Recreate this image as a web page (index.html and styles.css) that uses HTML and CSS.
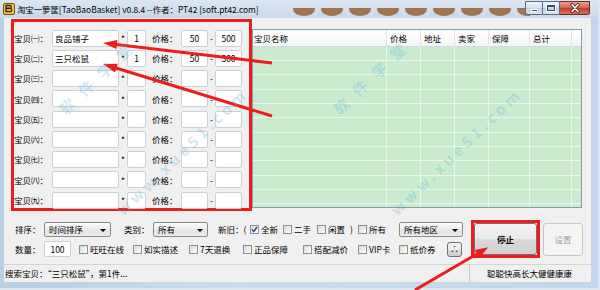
FILE: index.html
```html
<!DOCTYPE html>
<html lang="en">
<head>
    <meta charset="UTF-8">
    <meta name="viewport" content="width=device-width, initial-scale=1.0">
    <title>淘宝一箩筐</title>
    <link rel="stylesheet" href="styles.css">
</head>
<body>
    <div class="window">
        <div class="titlebar">
            <!-- desktop wallpaper seen through the glass -->
            <svg class="deco" width="240" height="10" viewBox="0 0 240 10">
                <g fill="#9c6a40">
                    <ellipse cx="14" cy="1" rx="11" ry="7"/>
                    <ellipse cx="42" cy="1" rx="11" ry="7"/>
                    <ellipse cx="70" cy="1" rx="11" ry="7"/>
                    <ellipse cx="98" cy="1" rx="11" ry="7"/>
                    <ellipse cx="126" cy="1" rx="11" ry="7"/>
                    <ellipse cx="154" cy="1" rx="11" ry="7"/>
                    <ellipse cx="182" cy="1" rx="11" ry="7"/>
                    <ellipse cx="210" cy="1" rx="11" ry="7"/>
                    <ellipse cx="238" cy="1" rx="11" ry="7"/>
                </g>
            </svg>
            <svg class="app-icon" width="12" height="12" viewBox="0 0 12 12">
                <rect x="0.5" y="0.5" width="11" height="11" rx="1.5" fill="#f3c53c" stroke="#7a4a10"/>
                <path d="M3 2.5h4.2c1.4 0 1.4 2.6 0 2.6H3z M3 5.6h4.6c1.5 0 1.5 3 0 3H3z" fill="none" stroke="#3a2408" stroke-width="1.3"/>
            </svg>
            <span class="title">淘宝一箩筐[TaoBaoBasket] v0.8.4 --作者：PT42 [soft.pt42.com]</span>
            <div class="controls">
                <span class="ctl min"><i></i></span>
                <span class="ctl max"><i></i></span>
                <span class="ctl close">
                    <svg width="12" height="10" viewBox="0 0 12 10">
                        <path d="M3 1.5l6 7M9 1.5l-6 7" stroke="#5a1a14" stroke-width="3.2" stroke-linecap="round"/>
                        <path d="M3 1.5l6 7M9 1.5l-6 7" stroke="#fff" stroke-width="1.6" stroke-linecap="round"/>
                    </svg>
                </span>
            </div>
        </div>

        <div class="client">
            <div class="top">
                <div class="items" id="items">
                    <!-- item rows are filled in below -->
                </div>
                <div class="list">
                    <table>
                        <thead>
                            <tr>
                                <th class="c-name">宝贝名称</th>
                                <th class="c-price">价格</th>
                                <th class="c-addr">地址</th>
                                <th class="c-seller">卖家</th>
                                <th class="c-guard">保障</th>
                                <th class="c-total">总计</th>
                                <th class="c-rest"></th>
                            </tr>
                        </thead>
                        <tbody id="resultRows"></tbody>
                    </table>
                </div>
            </div>

            <div class="bottom">
                <div class="filters">
                    <div class="frow frow-sort">
                        <span>排序：</span>
                        <span class="combo">时间排序</span>
                        <span>类别：</span>
                        <span class="combo">所有</span>
                        <span>新旧：(</span>
                        <label class="chk"><i class="box checked"><svg width="7" height="7" viewBox="0 0 7 7"><path d="M1 3.6l1.8 1.9L6 1" fill="none" stroke="#1f3f96" stroke-width="1.4"/></svg></i>全新</label>
                        <label class="chk"><i class="box"></i>二手</label>
                        <label class="chk"><i class="box"></i>闲置</label>
                        <span>)</span>
                        <label class="chk"><i class="box"></i>所有</label>
                        <span class="combo">所有地区</span>
                    </div>
                    <div class="frow frow-opts">
                        <span>数量：</span>
                        <span><input class="count" type="text" value="100"></span>
                        <label class="chk"><i class="box"></i>旺旺在线</label>
                        <label class="chk"><i class="box"></i>如实描述</label>
                        <label class="chk"><i class="box"></i>7天退换</label>
                        <label class="chk"><i class="box"></i>正品保障</label>
                        <label class="chk"><i class="box"></i>搭配减价</label>
                        <label class="chk"><i class="box"></i>VIP卡</label>
                        <label class="chk"><i class="box"></i>抵价券</label>
                        <button class="btn tiny">∴</button>
                    </div>
                </div>
                <div class="stop-mark">
                    <button class="btn stop">停止</button>
                </div>
                <button class="btn setup" disabled>设置</button>
            </div>
        </div>

        <div class="status">
            <span class="status-left">搜索宝贝：“三只松鼠”，第1件...</span>
            <span class="status-right">聪聪快高长大健健康康</span>
        </div>
    </div>

    <!-- annotation arrows drawn over the window -->
    <svg class="arrows" width="600" height="290" viewBox="0 0 600 290">
        <g stroke="#ee1d1d" stroke-width="3" fill="#ee1d1d">
            <line x1="272" y1="63" x2="116" y2="44.6"/>
            <polygon points="103,43 117.4,40.1 116.4,49.1" stroke="none"/>
            <line x1="272" y1="116" x2="116" y2="68"/>
            <polygon points="103,64 117.7,63.8 115.1,72.4" stroke="none"/>
            <line x1="415" y1="290" x2="478" y2="253.3"/>
            <polygon points="488.3,247.3 479.4,257.7 474.8,249.9" stroke="none"/>
        </g>
    </svg>

    <div class="wm wm-cn wm-a">软件学堂</div>
    <div class="wm wm-url wm-b">www.xue51.com</div>
    <div class="wm wm-cn wm-c">软件学堂</div>
    <div class="wm wm-url wm-d">www.xue51.com</div>

    <script>
        const items = [
            { name: "良品铺子", qty: "1", min: "50", max: "500" },
            { name: "三只松鼠", qty: "1", min: "50", max: "500" }
        ];
        const marks = ["㈠", "㈡", "㈢", "㈣", "㈤", "㈥", "㈦", "㈧", "㈨"];

        // Build the nine item rows
        const itemBox = document.getElementById("items");
        marks.forEach((mark, i) => {
            const data = items[i] || { name: "", qty: "", min: "", max: "" };
            const row = document.createElement("div");
            row.className = "item";
            row.innerHTML = `
                <span class="lbl">宝贝${mark}：</span>
                <input class="name" type="text" value="${data.name}">
                <span class="star">*</span>
                <input class="qty" type="text" value="${data.qty}">
                <span class="price">价格：</span>
                <input class="num" type="text" value="${data.min}">
                <span class="dash">-</span>
                <input class="num" type="text" value="${data.max}">
            `;
            itemBox.appendChild(row);
        });

        // Empty result list rows
        const listBody = document.getElementById("resultRows");
        for (let i = 0; i < 12; i++) {
            const row = document.createElement("tr");
            row.innerHTML = "<td></td><td></td><td></td><td></td><td></td><td></td><td></td>";
            listBody.appendChild(row);
        }
    </script>
</body>
</html>
```

FILE: styles.css
```css
* {
    box-sizing: border-box;
}
body {
    margin: 0;
    width: 600px;
    height: 290px;
    overflow: hidden;
    position: relative;
    background: #dfe6ee;
    font-family: "Noto Sans CJK SC", "DejaVu Sans", sans-serif;
    font-size: 8.5px;
    line-height: 1;
    color: #000;
}
.window {
    width: 598px;
    height: 288px;
    padding: 0 7px 6px 4px;
    display: flex;
    flex-direction: column;
    background: linear-gradient(90deg, #b9cfe6, #cddcec 40%, #c2d5ea);
}

/* title bar */
.titlebar {
    position: relative;
    flex: none;
    height: 18px;
    margin: 0 -7px 0 -4px;
    padding-left: 3px;
    display: flex;
    align-items: center;
    background: linear-gradient(#dce6f1, #c8d8ea);
}
.deco {
    position: absolute;
    left: 290px;
    top: 8px;
    opacity: 0.9;
}
.app-icon {
    flex: none;
    position: relative;
}
.title {
    position: relative;
    margin-left: 2px;
    font-size: 8.4px;
    white-space: nowrap;
}
.controls {
    display: flex;
    align-self: flex-start;
    margin: 1px 8px 0 auto;
    position: relative;
}
.ctl {
    height: 14px;
    display: flex;
    align-items: center;
    justify-content: center;
    border: 1px solid #596b86;
    border-left: none;
    background: linear-gradient(#eef3f9, #d4dfeb 50%, #c3d1e2 51%, #d9e4ef);
}
.min {
    width: 18px;
    border-left: 1px solid #596b86;
    border-bottom-left-radius: 3px;
}
.min i {
    width: 7px;
    height: 3px;
    margin-top: 5px;
    background: #3d4a5c;
    border: 1px solid #fff;
}
.max {
    width: 17px;
}
.max i {
    width: 8px;
    height: 6px;
    border: 1px solid #3d4a5c;
    border-top-width: 2px;
    box-shadow: 0 0 0 1px #fff;
}
.close {
    width: 30px;
    border-bottom-right-radius: 3px;
    border-color: #6b2a22;
    background: linear-gradient(#e6a396, #d0604d 50%, #c13e27 51%, #d8725a);
}

/* client area */
.client {
    flex: 1;
    display: flex;
    flex-direction: column;
    background: #f0f0f0;
}
.top {
    display: flex;
    align-items: flex-start;
}
.items {
    width: 241px;
    height: 192px;
    margin: 1px 0 0 7px;
    padding-top: 7.5px;
    border: 3px solid #ee1d1d;
    display: flex;
    flex-direction: column;
    gap: 3.25px;
}
.item {
    height: 17px;
    display: flex;
    align-items: center;
}
.item input,
.count {
    height: 17px;
    padding: 0 2px;
    border: 1px solid #ccd0d5;
    border-radius: 2px;
    background: #fff;
    font: inherit;
    color: #000;
}
.lbl {
    width: 38px;
}
.item .name {
    width: 67px;
}
.star {
    width: 8px;
    text-align: center;
}
.item .qty {
    width: 19px;
    text-align: center;
}
.price {
    width: 35px;
    padding-left: 6px;
}
.item .num {
    width: 27px;
    text-align: center;
}
.dash {
    width: 7px;
    text-align: center;
}

/* result list */
.list {
    width: 330px;
    height: 179px;
    margin-top: 11px;
    border: 1px solid #8d99a8;
    background: #caebce;
    overflow: hidden;
}
.list table {
    width: 100%;
    table-layout: fixed;
    border-collapse: separate;
    border-spacing: 0;
}
.list th {
    height: 17px;
    padding: 0 0 0 3px;
    text-align: left;
    font-weight: normal;
    border-right: 1px solid #e1e3e6;
    border-bottom: 1px solid #d5d7da;
    background: linear-gradient(#ffffff, #f4f5f7);
}
.list th.c-name {
    width: 134px;
    padding-left: 1px;
}
.c-price,
.c-addr,
.c-seller {
    width: 34px;
}
.c-guard {
    width: 41px;
}
.c-total {
    width: 42px;
}
.list th.c-rest {
    border-right: none;
}
.list td {
    height: 14px;
    padding: 0;
    border-right: 1px solid #ebf7ec;
    border-bottom: 1px solid #ebf7ec;
}
.list tr:nth-child(3n) td {
    height: 15px;
}
.list td:last-child {
    border-right: none;
}

/* options under the list */
.bottom {
    display: flex;
    align-items: flex-start;
    margin-top: 9px;
}
.filters {
    width: 467px;
    margin-top: 1px;
    padding-left: 11px;
    display: flex;
    flex-direction: column;
    gap: 4px;
}
.frow {
    height: 16px;
    display: grid;
    align-items: center;
}
.frow-sort {
    grid-template-columns: 29px 80px 29px 65px 32px 33px 34px 33px 8px 41px 64px;
}
.frow-opts {
    grid-template-columns: 29px 35px 54px 56px 54px 60px 55px 41px 48px 15px;
}
.combo {
    position: relative;
    height: 15px;
    padding-left: 4px;
    display: flex;
    align-items: center;
    border: 1px solid #8c8c8c;
    border-radius: 2px;
    background: linear-gradient(#fafafa, #ececec 50%, #e2e2e2 51%, #ebebeb);
}
.frow-sort .combo:nth-child(2) {
    width: 67px;
}
.frow-sort .combo:nth-child(4) {
    width: 55px;
}
.combo::after {
    content: "";
    position: absolute;
    right: 4px;
    top: 6px;
    border: 3px solid transparent;
    border-top: 3px solid #000;
    border-bottom: none;
}
.count {
    width: 27px;
    height: 16px;
    text-align: center;
}
.chk {
    display: flex;
    align-items: center;
    white-space: nowrap;
}
.box {
    width: 9px;
    height: 9px;
    margin-right: 2px;
    display: flex;
    align-items: center;
    justify-content: center;
    border: 1px solid #8e8f8f;
    background: linear-gradient(135deg, #d9dadb, #fdfdfd);
}
.btn {
    font: inherit;
    color: #000;
    border: 1px solid #707070;
    border-radius: 3px;
    background: linear-gradient(#f4f4f4, #e9e9e9 50%, #dbdbdb 51%, #cfcfcf);
}
.tiny {
    width: 15px;
    height: 15px;
    padding: 0;
    font-size: 8px;
}
.stop-mark {
    width: 69px;
    height: 38px;
    border: 3px solid #ee1d1d;
}
.stop {
    width: 63px;
    height: 32px;
    font-weight: bold;
}
.setup {
    width: 40px;
    height: 33px;
    margin: 3px 0 0 3px;
    color: #a3a3a3;
    border-color: #c4c7ca;
    background: #f4f4f4;
}

/* status bar */
.status {
    height: 18px;
    display: flex;
    align-items: center;
    background: #f0f0f0;
    border-top: 1px solid #d5d5d5;
}
.status-left {
    width: 466px;
    height: 100%;
    padding-left: 1px;
    display: flex;
    align-items: center;
    border-right: 1px solid #c9c9c9;
}
.status-right {
    padding-left: 17px;
}

/* overlays */
.arrows {
    position: absolute;
    left: 0;
    top: 0;
}
.wm {
    position: absolute;
    transform: translate(-50%, -50%) rotate(-44deg);
    white-space: nowrap;
    color: rgba(90, 175, 215, 0.28);
    font-weight: bold;
    line-height: 1;
}
.wm-cn {
    font-size: 15px;
    letter-spacing: 11px;
}
.wm-url {
    font-size: 15px;
    letter-spacing: 4px;
}
.wm-a {
    left: 99px;
    top: 75px;
}
.wm-b {
    left: 182px;
    top: 151px;
}
.wm-c {
    left: 373px;
    top: 75px;
}
.wm-d {
    left: 456px;
    top: 151px;
}
```
